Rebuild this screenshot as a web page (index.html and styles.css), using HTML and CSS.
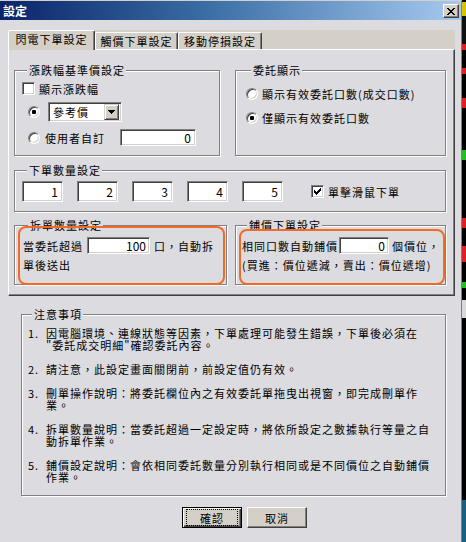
FILE: index.html
```html
<!DOCTYPE html>
<html lang="zh-Hant">
<head>
<meta charset="utf-8">
<title>設定</title>
<link rel="stylesheet" href="styles.css">
</head>
<body>
<div class="screen">
  <div class="dialog">
    <div class="titlebar">
      <span class="title">設定</span>
      <span class="close"><svg width="8" height="7" viewBox="0 0 8 7"><path d="M0 0h2v1H0zM6 0h2v1H6zM1 1h2v1H1zM5 1h2v1H5zM2 2h4v1H2zM3 3h2v1H3zM2 4h4v1H2zM1 5h2v1H1zM5 5h2v1H5zM0 6h2v1H0zM6 6h2v1H6z"/></svg></span>
    </div>

    <div class="tabs">
      <div class="tab tab1 active">閃電下單設定</div>
      <div class="tab tab2">觸價下單設定</div>
      <div class="tab tab3">移動停損設定</div>
    </div>

    <div class="panel">
      <div class="row row-top">
        <div class="group g-base">
          <span class="legend">漲跌幅基準價設定</span>
          <div class="line l-check"><span class="checkbox"></span><span>顯示漲跌幅</span></div>
          <div class="line l-radio1">
            <span class="radio checked"></span>
            <div class="combo"><span class="combo-text">參考價</span><span class="combo-btn"><svg width="7" height="4" viewBox="0 0 7 4"><path d="M0 0h7v1H0zM1 1h5v1H1zM2 2h3v1H2zM3 3h1v1H3z"/></svg></span></div>
          </div>
          <div class="line l-radio2">
            <span class="radio"></span><span class="lbl">使用者自訂</span><input class="field f-custom" type="text" value="0" readonly>
          </div>
        </div>
        <div class="group g-show">
          <span class="legend">委託顯示</span>
          <div class="line opt opt1"><span class="radio"></span><span>顯示有效委託口數(成交口數)</span></div>
          <div class="line opt opt2"><span class="radio checked"></span><span>僅顯示有效委託口數</span></div>
        </div>
      </div>

      <div class="group g-qty">
        <span class="legend">下單數量設定</span>
        <div class="line qty-line">
          <input class="field f-qty" type="text" value="1" readonly>
          <input class="field f-qty" type="text" value="2" readonly>
          <input class="field f-qty" type="text" value="3" readonly>
          <input class="field f-qty" type="text" value="4" readonly>
          <input class="field f-qty" type="text" value="5" readonly>
          <span class="qty-check"><span class="checkbox"><svg width="7" height="7" viewBox="0 0 7 7"><path d="M6 0h1v1H6zM5 1h2v1H5zM0 2h1v1H0zM4 2h3v1H4zM0 3h2v1H0zM3 3h3v1H3zM0 4h5v1H0zM1 5h3v1H1zM2 6h1v1H2z"/></svg></span><span>單擊滑鼠下單</span></span>
        </div>
      </div>

      <div class="row row-bottom">
        <div class="group g-split">
          <span class="legend">拆單數量設定</span>
          <div class="line sp-line1"><span>當委託超過</span><input class="field f-split" type="text" value="100" readonly><span>口，自動拆</span></div>
          <div class="sp-line2">單後送出</div>
          <span class="mark mark-split"></span>
        </div>
        <div class="group g-spread">
          <span class="legend">鋪價下單設定</span>
          <div class="line sp-line1"><span>相同口數自動鋪價</span><input class="field f-spread" type="text" value="0" readonly><span class="after">個價位，</span></div>
          <div class="sp-line2">(買進：價位遞減，賣出：價位遞增)</div>
          <span class="mark mark-spread"></span>
        </div>
      </div>
    </div>

    <div class="group notes">
      <span class="legend">注意事項</span>
      <div class="items">
        <div class="item"><span class="num">1.</span><span class="txt">因電腦環境、連線狀態等因素，下單處理可能發生錯誤，下單後必須在<br>"委託成交明細"確認委託內容。</span></div>
        <div class="item"><span class="num">2.</span><span class="txt">請注意，此設定畫面關閉前，前設定值仍有效。</span></div>
        <div class="item"><span class="num">3.</span><span class="txt">刪單操作說明：將委託欄位內之有效委託單拖曳出視窗，即完成刪單作<br>業。</span></div>
        <div class="item"><span class="num">4.</span><span class="txt">拆單數量說明：當委託超過一定設定時，將依所設定之數據執行等量之自<br>動拆單作業。</span></div>
        <div class="item"><span class="num">5.</span><span class="txt">鋪價設定說明：會依相同委託數量分別執行相同或是不同價位之自動鋪價<br>作業。</span></div>
      </div>
    </div>

    <div class="buttons">
      <span class="btn default"><span class="focus">確認</span></span>
      <span class="btn">取消</span>
    </div>
  </div>
  <div class="strip"></div>
</div>
</body>
</html>
```
FILE: styles.css
```css
* { box-sizing: border-box; margin: 0; padding: 0; }

html, body {
  width: 466px;
  height: 542px;
  overflow: hidden;
}

body {
  background: #dcdbdf;
  color: #000;
  font-family: "Noto Sans CJK TC", "Liberation Sans", sans-serif;
  font-size: 11px;
  letter-spacing: 1px;
  line-height: 12px;
}

.screen {
  display: flex;
  height: 542px;
}

.dialog {
  flex: none;
  width: 462px;
  height: 542px;
  background: #dcdbdf;
  border-top: 1px solid #d4d0c8;
  border-right: 1px solid #808080;
}

/* title bar */
.titlebar {
  height: 19px;
  display: flex;
  justify-content: space-between;
  align-items: flex-start;
  background: linear-gradient(90deg, #0a246a 0%, #3a6ea5 45%, #a6caf0 100%);
  padding: 0 2px 0 3px;
}

.title {
  color: #fff;
  font-weight: bold;
  font-size: 12px;
  letter-spacing: 0;
  padding-top: 4px;
  line-height: 12px;
}

.close {
  margin-top: 3px;
  width: 16px;
  height: 14px;
  background: #d4d0c8;
  border: 1px solid;
  border-color: #fff #404040 #404040 #fff;
  box-shadow: inset -1px -1px #808080;
  display: flex;
  align-items: center;
  justify-content: center;
}

.close svg { display: block; fill: #000; }

/* tabs */
.tabs {
  margin: 10px 0 0 8px;
  width: 447px;
  height: 19px;
  background: #d4d0c8;
  display: flex;
  align-items: flex-end;
}

.tab {
  height: 17px;
  padding-top: 2px;
  text-align: center;
  background: #d4d0c8;
  border-top: 1px solid #fff;
  border-left: 1px solid #fff;
  border-right: 1px solid #404040;
  box-shadow: inset -1px 0 #808080;
  border-radius: 2px 2px 0 0;
}

.tab.active {
  position: relative;
  z-index: 1;
  height: 20px;
  margin-bottom: -1px;
}

.tab1 { width: 87px; }
.tab2 { width: 83px; }
.tab3 { width: 84px; }

/* panel */
.panel {
  margin-left: 8px;
  width: 447px;
  height: 247px;
  background: #dcdbdf;
  border: 1px solid;
  border-color: #fff #404040 #404040 #fff;
  box-shadow: inset -1px -1px #808080;
  padding-left: 5px;
}

.row { display: flex; }
.row-top { margin-top: 20px; gap: 15px; }
.row-bottom { margin-top: 13px; gap: 8px; }

/* group boxes */
.group {
  position: relative;
  border: 1px solid #808080;
  box-shadow: inset 1px 1px #fff, 1px 1px #fff;
}

.legend {
  display: block;
  width: max-content;
  height: 12px;
  margin: -7px 0 0 5px;
  padding: 0 1px 0 2px;
  background: #dcdbdf;
  line-height: 12px;
}

.line {
  display: flex;
  align-items: center;
}

/* controls */
.checkbox {
  flex: none;
  width: 13px;
  height: 13px;
  padding: 2px;
  background: #fff;
  border: 1px solid;
  border-color: #808080 #fff #fff #808080;
  box-shadow: inset 1px 1px #404040, inset -1px -1px #d4d0c8;
}

.checkbox svg { display: block; fill: #000; }

.radio {
  flex: none;
  position: relative;
  width: 12px;
  height: 12px;
  border-radius: 50%;
  background: #fff;
  border: 1px solid;
  border-color: #808080 #fff #fff #808080;
  box-shadow: inset 1px 1px #404040, inset -1px -1px #d4d0c8;
}

.radio.checked::after {
  content: "";
  position: absolute;
  left: 3px;
  top: 3px;
  width: 4px;
  height: 4px;
  border-radius: 1px;
  background: #000;
}

.field {
  display: block;
  font: inherit;
  font-size: 12px;
  letter-spacing: 0;
  line-height: 12px;
  color: #000;
  background: #fff;
  border: 1px solid;
  border-color: #808080 #fff #fff #808080;
  border-radius: 0;
  box-shadow: inset 1px 1px #404040, inset -1px -1px #d4d0c8;
  padding: 0 3px 0 0;
  text-align: right;
  outline: none;
}

.combo {
  display: flex;
  align-items: center;
  width: 74px;
  height: 20px;
  padding: 2px;
  background: #fff;
  border: 1px solid;
  border-color: #808080 #fff #fff #808080;
  box-shadow: inset 1px 1px #404040, inset -1px -1px #d4d0c8;
}

.combo-text { flex: 1; padding-left: 2px; }

.combo-btn {
  width: 15px;
  height: 16px;
  background: #d4d0c8;
  border: 1px solid;
  border-color: #d4d0c8 #404040 #404040 #d4d0c8;
  box-shadow: inset 1px 1px #fff, inset -1px -1px #808080;
  display: flex;
  align-items: center;
  justify-content: center;
}

.combo-btn svg { display: block; fill: #000; }

/* group 1 */
.g-base {
  width: 206px;
  height: 86px;
  padding-left: 7px;
}

.l-check { margin-top: 6px; height: 13px; gap: 4px; }
.l-radio1 { margin-top: 7px; height: 20px; padding-left: 6px; gap: 8px; }
.l-radio2 { margin-top: 7px; height: 17px; padding-left: 6px; }
.l-radio2 .lbl { margin-left: 5px; }
.f-custom { width: 76px; height: 17px; margin-left: 15px; padding-right: 4px; }

/* group 2 */
.g-show {
  width: 211px;
  height: 86px;
  padding-left: 10px;
}

.opt { height: 12px; gap: 4px; margin-top: 12px; }

/* group 3 */
.g-qty {
  margin-top: 14px;
  width: 432px;
  height: 42px;
  padding-left: 7px;
}

.qty-line { margin-top: 5px; height: 21px; gap: 14px; }
.f-qty { width: 41px; height: 21px; padding-right: 4px; }

.qty-check {
  display: flex;
  align-items: center;
  gap: 4px;
  margin-left: 14px;
}

/* group 4 & 5 */
.g-split {
  width: 213px;
  height: 60px;
  padding-left: 8px;
}

.g-spread {
  width: 211px;
  height: 60px;
  padding-left: 6px;
}

.sp-line1 { margin-top: 6px; height: 17px; }
.sp-line2 { margin-top: 5px; height: 12px; }

.f-split { width: 63px; height: 17px; margin: 0 4px 0 4px; padding-right: 3px; }
.f-spread { width: 50px; height: 17px; margin: 0 3px 0 1px; padding-right: 3px; }

/* orange annotation marks */
.mark {
  position: absolute;
  z-index: 2;
  border: 2px solid #f36a24;
  border-radius: 8px;
  pointer-events: none;
}

.mark-split { left: 3px; top: 0; width: 207px; height: 59px; }
.mark-spread { left: 3px; top: 3px; width: 206px; height: 56px; }

/* notes */
.notes {
  margin: 18px 0 0 21px;
  width: 425px;
  height: 182px;
  padding-left: 6px;
}

.notes .legend { margin-left: 4px; }

.items { margin-top: 7px; }

.item { display: flex; }
.item + .item { margin-top: 12px; }

.num { flex: none; width: 18px; }

/* buttons */
.buttons {
  margin-top: 11px;
  padding-left: 182px;
  display: flex;
  gap: 5px;
}

.btn {
  width: 60px;
  height: 21px;
  background: #d4d0c8;
  border: 1px solid;
  border-color: #fff #404040 #404040 #fff;
  box-shadow: inset -1px -1px #808080;
  display: flex;
  align-items: center;
  justify-content: center;
}

.btn.default {
  border-color: #000;
  box-shadow: inset 1px 1px #fff, inset -1px -1px #404040, inset -2px -2px #808080;
}

.focus {
  width: 52px;
  height: 17px;
  border: 1px dotted #000;
  display: flex;
  align-items: center;
  justify-content: center;
}

/* neighbouring application visible at right edge */
.strip {
  flex: none;
  width: 4px;
  height: 542px;
  background: linear-gradient(to bottom,
    #000 0 2px, #d6c400 2px 16px, #101010 16px 44px,
    #e02020 44px 50px, #000 50px 68px, #e02020 68px 74px,
    #000 74px 98px, #e02020 98px 108px, #000 108px 150px,
    #20c020 150px 160px, #000 160px 218px, #e02020 218px 228px,
    #000 228px 246px, #e02020 246px 262px, #000 262px 282px,
    #20c020 282px 288px, #000 288px 300px, #d8d8d8 300px 318px,
    #000 318px 500px, #1a5f80 500px 542px);
}
```
